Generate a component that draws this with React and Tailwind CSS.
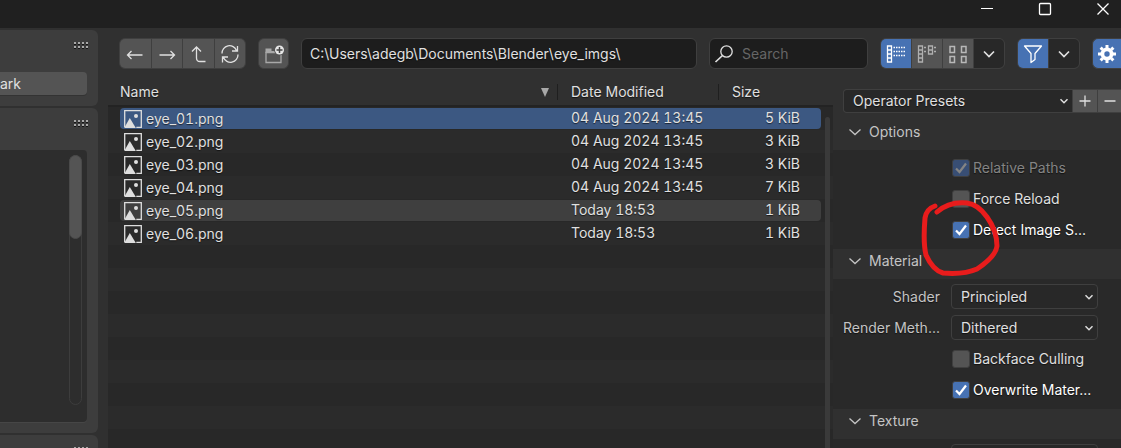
import React from "react";

const files = [
  { name: "eye_01.png", date: "04 Aug 2024 13:45", size: "5 KiB", tone: "bg-[#3c5882]" },
  { name: "eye_02.png", date: "04 Aug 2024 13:45", size: "3 KiB", tone: "" },
  { name: "eye_03.png", date: "04 Aug 2024 13:45", size: "3 KiB", tone: "" },
  { name: "eye_04.png", date: "04 Aug 2024 13:45", size: "7 KiB", tone: "" },
  { name: "eye_05.png", date: "Today 18:53", size: "1 KiB", tone: "bg-[#3f3f3f]" },
  { name: "eye_06.png", date: "Today 18:53", size: "1 KiB", tone: "" },
];

const Icon = ({ children, className = "", w = 20, h = 20 }) => (
  <svg
    width={w}
    height={h}
    viewBox={`0 0 ${w} ${h}`}
    fill="none"
    stroke="currentColor"
    strokeWidth="1.3"
    className={`shrink-0 ${className}`}
    aria-hidden="true"
  >
    {children}
  </svg>
);

const Grip = () => (
  <svg width="15" height="7" viewBox="0 0 15 7" aria-hidden="true" className="shrink-0">
    {[0, 4, 8, 12].map((x) => (
      <g key={x}>
        <rect x={x} y="0" width="2" height="2" fill="#a8a8a8" />
        <rect x={x} y="2" width="2" height="1" fill="#151515" />
        <rect x={x} y="4" width="2" height="2" fill="#a8a8a8" />
        <rect x={x} y="6" width="2" height="1" fill="#151515" />
      </g>
    ))}
  </svg>
);

const Chevron = ({ className = "" }) => (
  <Icon w={10} h={6} className={className}>
    <path d="M1.500 1.200l3.500 3.500 3.500-3.500" strokeWidth="1.5" />
  </Icon>
);

const ImageIcon = () => (
  <Icon w={18} h={18} className="text-[#dedede]">
    <path d="M.7 17V.7h16.600v16.600h-5" />
    <path d="M.2 18 5.800 8l6 10z" fill="currentColor" stroke="none" />
    <circle cx="12" cy="6" r="2" fill="currentColor" stroke="none" />
  </Icon>
);

const Tool = ({ label, className = "", children }) => (
  <button type="button" aria-label={label} className={`flex h-full flex-1 items-center justify-center ${className}`}>
    {children}
  </button>
);

const group = "flex h-[31px] shrink-0 gap-px overflow-hidden rounded-md border border-[#3f3f3f] bg-[#3f3f3f]";

const Check = ({ label, checked = false, disabled = false }) => (
  <label
    className={`flex h-[31px] items-center gap-[3px] pl-[119px] whitespace-nowrap ${
      disabled ? "text-[#848484]" : checked ? "text-white" : "text-[#e0e0e0]"
    }`}
  >
    <span className="grid shrink-0 place-items-center">
      <input
        type="checkbox"
        defaultChecked={checked}
        disabled={disabled}
        className="col-start-1 row-start-1 size-[18px] appearance-none rounded-[3px] border border-[#3f3f3f] bg-[#545454] checked:bg-[#4772b3] disabled:checked:bg-[#384e74]"
      />
      {checked && (
        <Icon w={12} h={12} className="pointer-events-none col-start-1 row-start-1">
          <path d="M1 6.500 4.500 10 11 1.500" strokeWidth="2.200" />
        </Icon>
      )}
    </span>
    {label}
  </label>
);

const Select = ({ value, label, className = "" }) => (
  <span className={`grid items-center ${className}`}>
    <select
      aria-label={label}
      className="col-start-1 row-start-1 h-full w-full appearance-none bg-transparent pl-[9px] text-[#e0e0e0] outline-none [text-shadow:inherit]"
    >
      <option>{value}</option>
    </select>
    <Chevron className="pointer-events-none col-start-1 row-start-1 mr-[3px] justify-self-end text-[#dcdcdc]" />
  </span>
);

const Field = ({ label, value, name = label }) => (
  <div className="flex h-[31px] items-center">
    <span className="w-[107px] shrink-0 pl-3 whitespace-nowrap text-[#c4c4c4]">
      <span className="flex justify-end">{label}</span>
    </span>
    <Select
      label={name}
      value={value}
      className="mr-[23px] ml-[11px] h-[25px] flex-1 rounded border border-[#3f3f3f] bg-[#282828]"
    />
  </div>
);

const Section = ({ title, children }) => (
  <section>
    <h2 className="bg-[#303030] pb-1.5">
      <button type="button" className="flex h-6 w-full items-center gap-2 pl-4 text-[#c4c4c4]">
        <Icon w={12} h={8}>
          <path d="M.5 1.500l5.500 5 5.500-5" />
        </Icon>
        {title}
      </button>
    </h2>
    <div className="bg-[#292929] pt-[2px] pb-1">{children}</div>
  </section>
);

export default function App() {
  return (
    <div className="relative flex h-screen flex-col overflow-hidden bg-[#303030] font-['Inter',sans-serif] text-sm leading-5 text-[#e0e0e0] [text-shadow:0_1px_1px_rgba(0,0,0,0.6)]">
      <header className="flex h-7 shrink-0 items-start justify-end gap-11 bg-[#202020] pt-[2px] pr-[11px] text-white">
        <button type="button" aria-label="Minimize">
          <Icon w={14} h={14}><path d="M1 6.500h12" strokeWidth="1" /></Icon>
        </button>
        <button type="button" aria-label="Maximize">
          <Icon w={14} h={14}><rect x="1.500" y="1.500" width="11" height="11" rx="1" /></Icon>
        </button>
        <button type="button" aria-label="Close">
          <Icon w={14} h={14}><path d="M1.500 1.500l11 11M12.500 1.500l-11 11" /></Icon>
        </button>
      </header>

      <div className="flex min-h-0 flex-1">
        <aside className="flex w-[98px] shrink-0 flex-col gap-[2px] pt-[2px]">
          <section className="h-[76px] shrink-0 rounded-r-md bg-[#3d3d3d] pr-[9px]">
            <div className="flex h-[42px] justify-end pt-3"><Grip /></div>
            <button type="button" className="h-[23px] w-[87px] rounded-r bg-[#545454] text-left shadow-[0_1px_0_#333]">
              ark
            </button>
          </section>
          <section className="h-[325px] shrink-0 rounded-r-md bg-[#3d3d3d] pr-[9px]">
            <div className="flex h-[42px] justify-end pt-3"><Grip /></div>
            <div className="flex h-[272px] w-[87px] justify-end rounded-r bg-[#2d2d2d] pt-[5px] pr-[5px] shadow-[0_1px_0_#464646]">
              <div className="h-[250px] w-[13px] rounded-full border border-[#3d3d3d]">
                <div className="-m-px h-[84px] rounded-full border border-[#4a4a4a] bg-[#545454]" />
              </div>
            </div>
          </section>
          <section className="h-16 shrink-0 rounded-r-md bg-[#3d3d3d] pr-[9px]">
            <div className="flex justify-end pt-3"><Grip /></div>
          </section>
        </aside>

        <div className="ml-2.5 flex min-w-0 flex-1 flex-col">
          <div className="flex h-[51px] shrink-0 items-center gap-3 pl-[11px] text-[#e0e0e0]">
            <div className={`${group} w-[127px]`}>
              <Tool label="Back" className="bg-[#545454]">
                <Icon><path d="M17.500 11h-15M6.500 7l-4 4 4 4" /></Icon>
              </Tool>
              <Tool label="Forward" className="bg-[#545454]">
                <Icon><path d="M2.500 11h15M13.500 7l4 4-4 4" /></Icon>
              </Tool>
              <Tool label="Parent directory" className="bg-[#545454]">
                <Icon><path d="M4 7.500l4.500-4.500L13 7.500M8.500 3v11q0 3.500 3.500 3.500h5.500" /></Icon>
              </Tool>
              <Tool label="Refresh" className="bg-[#545454]">
                <Icon>
                  <path d="M2 9.500A7.500 7.500 0 0 1 16.500 6.500M17.500 2v5H12M18 10.500A7.500 7.500 0 0 1 3.500 13.500M2.500 18.500V13H8" />
                </Icon>
              </Tool>
            </div>
            <button type="button" aria-label="New folder" className="flex size-[31px] shrink-0 items-center justify-center rounded-md border border-[#3f3f3f] bg-[#545454]">
              <Icon>
                <path d="M2 8.500h15V18.500H2z" stroke="#a8a8a8" />
                <path d="M1.500 9V4.500h6v2.500h7v2z" fill="#a8a8a8" stroke="none" />
                <circle cx="15.500" cy="6" r="5.400" fill="#545454" stroke="none" />
                <circle cx="15.500" cy="6" r="4.500" fill="#e6e6e6" stroke="none" />
                <path d="M15.500 3v6M12.500 6h6" stroke="#444" strokeWidth="1.5" />
              </Icon>
            </button>
            <input
              aria-label="Path"
              defaultValue={"C:\\Users\\adegb\\Documents\\Blender\\eye_imgs\\"}
              className="h-[31px] min-w-0 flex-1 rounded-md border border-[#3f3f3f] bg-[#1d1d1d] pl-2 outline-none [text-shadow:inherit]"
            />
            <label className="flex h-[31px] w-[159px] shrink-0 items-center gap-2 rounded-md border border-[#3f3f3f] bg-[#1d1d1d] pl-1">
              <Icon>
                <circle cx="12.500" cy="7.500" r="5.700" />
                <path d="M8.500 11.500 1.500 18" strokeWidth="1.700" />
              </Icon>
              <input aria-label="Search" placeholder="Search" className="w-24 bg-transparent outline-none placeholder:text-[#666]" />
            </label>
            <div className={`${group} w-[125px]`}>
              <Tool label="Vertical list" className="bg-[#4772b3]">
                <Icon>
                  <path d="M1.500 2h4v16h-4zM1.500 6h4M1.500 10h4M1.500 14h4" stroke="#fff" />
                  <path d="M7.500 3.500H19M7.500 7.500H19M7.500 11.500H19" stroke="#fff" strokeDasharray="1.500 1" />
                </Icon>
              </Tool>
              <Tool label="Horizontal list" className="bg-[#545454] text-[#b0b0b0]">
                <Icon>
                  <path d="M1.500 2h4v16h-4zM1.500 6h4M1.500 10h4M1.500 14h4M11.500 2h4v8h-4zM11.500 6h4" />
                  <path d="M7 3.500h2M7 7.500h2M17 3.500h2M17 7.500h2" />
                </Icon>
              </Tool>
              <Tool label="Thumbnails" className="bg-[#545454] text-[#b8b8b8]">
                <Icon>
                  <path d="M2 2.500h4.500v6H2zM13.500 2.500H18v6h-4.500zM2 12.500h4.500v6H2zM13.500 12.500H18v6h-4.500z" strokeWidth="1.5" />
                </Icon>
              </Tool>
              <Tool label="Display settings" className="bg-[#282828]">
                <Icon w={12} h={8}><path d="M1 1.500l5 5 5-5" strokeWidth="1.7" /></Icon>
              </Tool>
            </div>
            <div className={`${group} w-[63px]`}>
              <Tool label="Filter" className="bg-[#4772b3] text-white">
                <Icon><path d="M1.500 2h17l-6.500 7.500v6L8 18.500v-9z" strokeLinejoin="round" /></Icon>
              </Tool>
              <Tool label="Filter settings" className="bg-[#282828]">
                <Icon w={12} h={8}><path d="M1 1.500l5 5 5-5" strokeWidth="1.7" /></Icon>
              </Tool>
            </div>
            <button type="button" aria-label="Toggle options" className="flex h-[31px] w-[29px] shrink-0 items-center justify-center rounded-l-md border border-r-0 border-[#3f3f3f] bg-[#4772b3] text-white">
              <Icon>
                <circle cx="10" cy="10" r="4.600" strokeWidth="3.800" />
                {[0, 45, 90, 135, 180, 225, 270, 315].map((a) => (
                  <path key={a} d="M10 1v3" strokeWidth="3" transform={`rotate(${a} 10 10)`} />
                ))}
              </Icon>
            </button>
          </div>

          <div className="flex min-h-0 flex-1">
            <main className="flex min-w-0 flex-1 overflow-hidden bg-[repeating-linear-gradient(#282828_0_23px,#2b2b2b_23px_46px)] [background-position:0_28px]">
              <table className="h-fit w-full table-fixed border-separate border-spacing-0">
                <colgroup>
                  <col />
                  <col className="w-[161px]" />
                  <col className="w-[114px]" />
                </colgroup>
                <thead>
                  <tr className="h-[28px] bg-[#303030] text-left">
                    <th className="border-b-2 border-[#232323] p-0 font-normal">
                      <div className="flex h-4 items-center justify-between border-r border-[#1f1f1f] pr-2 pl-3">
                        Name
                        <svg width="8" height="9" viewBox="0 0 8 9" fill="#a8a8a8" aria-hidden="true"><path d="M0 0h8L4 9z" /></svg>
                      </div>
                    </th>
                    <th className="border-b-2 border-[#232323] p-0 font-normal">
                      <div className="flex h-4 items-center border-r border-[#1f1f1f] pl-[13px]">Date Modified</div>
                    </th>
                    <th className="border-b-2 border-[#232323] p-0 font-normal">
                      <div className="flex h-4 items-center pl-[13px]">Size</div>
                    </th>
                  </tr>
                </thead>
                <tbody className="tabular-nums">
                  {files.map((f) => (
                    <tr key={f.name} className="h-[23px]">
                      <td className="p-0 py-px pl-3">
                        <div className={`flex h-[21px] items-center gap-1 rounded-l pl-1 ${f.tone}`}>
                          <ImageIcon />
                          {f.name}
                        </div>
                      </td>
                      <td className="p-0 py-px">
                        <div className={`h-[21px] pl-[13px] ${f.tone}`}>{f.date}</div>
                      </td>
                      <td className="p-0 py-px pr-3">
                        <div className={`h-[21px] rounded-r pr-[21px] text-right ${f.tone}`}>{f.size}</div>
                      </td>
                    </tr>
                  ))}
                </tbody>
              </table>
              <div className="mt-[38px] -ml-[8px] w-[5px] shrink-0 rounded-t-full bg-[#3a3a3a]" />
              <div className="w-[3px] shrink-0" />
            </main>

            <aside className="w-72 shrink-0">
              <div className="flex pt-2.5 pb-[7px] pl-2.5">
                <div className="flex h-6 flex-1 gap-px overflow-hidden rounded-l border border-r-0 border-[#3f3f3f] bg-[#3f3f3f]">
                  <Select label="Operator presets" value="Operator Presets" className="flex-1 bg-[#282828]" />
                  <button type="button" aria-label="Add preset" className="flex w-6 items-center justify-center bg-[#545454]">
                    <Icon w={12} h={12}><path d="M6 .5v11M.5 6h11" /></Icon>
                  </button>
                  <button type="button" aria-label="Remove preset" className="flex w-[23px] items-center justify-center bg-[#545454]">
                    <Icon w={12} h={12}><path d="M.5 6h11" /></Icon>
                  </button>
                </div>
              </div>
              <Section title="Options">
                <Check label="Relative Paths" checked disabled />
                <Check label="Force Reload" />
                <Check label="Detect Image S..." checked />
              </Section>
              <Section title="Material">
                <Field label="Shader" value="Principled" />
                <Field label="Render Meth..." value="Dithered" />
                <Check label="Backface Culling" />
                <Check label="Overwrite Mater..." checked />
              </Section>
              <Section title="Texture">
                <Field label="" name="Texture" value="" />
              </Section>
            </aside>
          </div>
        </div>
      </div>

      <svg
        width="80"
        height="78"
        viewBox="0 0 80 78"
        fill="none"
        stroke="#e81c1c"
        strokeWidth="5"
        strokeLinecap="round"
        strokeLinejoin="round"
        className="pointer-events-none absolute top-[198px] right-[120px]"
        aria-hidden="true"
      >
        <path d="M14 8C8 10 5 14 4 20C3 32 2 45 5 57C9 66 15 73 22 75C34 76 47 75 56 71C65 65 75 57 76 48C76 37 71 26 66 19C61 12 55 6 46 5C36 4 25 6 16 14" />
      </svg>
    </div>
  );
}
